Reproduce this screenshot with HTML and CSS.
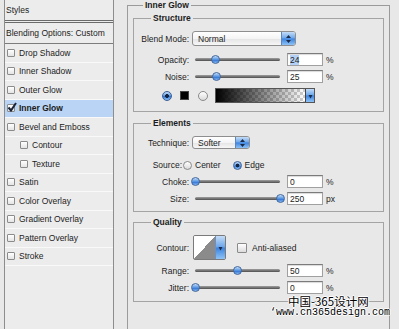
FILE: index.html
```html
<!DOCTYPE html>
<html lang="en">
<head>
    <meta charset="UTF-8">
    <meta name="viewport" content="width=device-width, initial-scale=1.0">
    <title>Layer Style - Inner Glow</title>
    <link rel="stylesheet" href="styles.css">
</head>
<body>

    <div class="window">
        <!-- список стилей слева -->
        <div class="styles-list">
            <div class="styles-head">Styles</div>
            <div class="blend-head">Blending Options: Custom</div>
            <div class="item"><span class="check"></span>Drop Shadow</div>
            <div class="item"><span class="check"></span>Inner Shadow</div>
            <div class="item"><span class="check"></span>Outer Glow</div>
            <div class="item selected">
                <span class="check">
                    <svg class="tick" width="10" height="10" viewBox="0 0 10 10"><path d="M1.5 5.5 L4 8.5 L9 1" fill="none" stroke="#1b2336" stroke-width="2"/></svg>
                </span>Inner Glow
            </div>
            <div class="item"><span class="check"></span>Bevel and Emboss</div>
            <div class="item sub"><span class="check"></span>Contour</div>
            <div class="item sub"><span class="check"></span>Texture</div>
            <div class="item"><span class="check"></span>Satin</div>
            <div class="item"><span class="check"></span>Color Overlay</div>
            <div class="item"><span class="check"></span>Gradient Overlay</div>
            <div class="item"><span class="check"></span>Pattern Overlay</div>
            <div class="item"><span class="check"></span>Stroke</div>
        </div>

        <!-- панель настроек -->
        <fieldset class="panel">
            <legend>Inner Glow</legend>

            <fieldset class="group">
                <legend>Structure</legend>
                <div class="row row-popup">
                    <span class="lbl">Blend Mode:</span>
                    <div class="popup popup-blend">
                        <span class="popup-text">Normal</span>
                        <span class="stepper"><svg width="7" height="10" viewBox="0 0 7 10"><path d="M3.5 1 L6 4 H1 Z M3.5 9 L6 6 H1 Z" fill="#1c2c48"/></svg></span>
                    </div>
                </div>
                <div class="row row-opacity">
                    <span class="lbl">Opacity:</span>
                    <div class="slider"><span class="knob" style="left: calc(24% - 4.5px)"></span></div>
                    <span class="num"><span class="sel">24</span></span>
                    <span class="unit">%</span>
                </div>
                <div class="row">
                    <span class="lbl">Noise:</span>
                    <div class="slider"><span class="knob" style="left: calc(25% - 4.5px)"></span></div>
                    <span class="num">25</span>
                    <span class="unit">%</span>
                </div>
                <div class="row row-color">
                    <span class="radio big on"></span>
                    <span class="swatch"></span>
                    <span class="radio big"></span>
                    <div class="gradient">
                        <span class="gradient-bar"></span>
                        <span class="drop"><svg width="5" height="8" viewBox="0 0 5 8"><path d="M0.5 3 H4.5 L2.5 6.5 Z" fill="#1c2c48"/></svg></span>
                    </div>
                </div>
            </fieldset>

            <fieldset class="group group-elements">
                <legend>Elements</legend>
                <div class="row row-tech">
                    <span class="lbl">Technique:</span>
                    <div class="popup popup-tech">
                        <span class="popup-text">Softer</span>
                        <span class="stepper"><svg width="7" height="10" viewBox="0 0 7 10"><path d="M3.5 1 L6 4 H1 Z M3.5 9 L6 6 H1 Z" fill="#1c2c48"/></svg></span>
                    </div>
                </div>
                <div class="row row-source">
                    <span class="lbl lbl-source">Source:</span>
                    <span class="radio"></span>
                    <span class="opt">Center</span>
                    <span class="radio on"></span>
                    <span class="opt">Edge</span>
                </div>
                <div class="row">
                    <span class="lbl">Choke:</span>
                    <div class="slider"><span class="knob" style="left: calc(0% - 4.5px)"></span></div>
                    <span class="num">0</span>
                    <span class="unit">%</span>
                </div>
                <div class="row">
                    <span class="lbl">Size:</span>
                    <div class="slider"><span class="knob" style="left: calc(100% - 4.5px)"></span></div>
                    <span class="num">250</span>
                    <span class="unit">px</span>
                </div>
            </fieldset>

            <fieldset class="group group-quality">
                <legend>Quality</legend>
                <div class="row row-contour">
                    <span class="lbl">Contour:</span>
                    <div class="contour">
                        <span class="contour-curve"></span>
                        <span class="drop"><svg width="5" height="8" viewBox="0 0 5 8"><path d="M0.5 3 H4.5 L2.5 6.5 Z" fill="#1c2c48"/></svg></span>
                    </div>
                    <span class="box"></span>
                    <span class="opt">Anti-aliased</span>
                </div>
                <div class="row">
                    <span class="lbl">Range:</span>
                    <div class="slider"><span class="knob" style="left: calc(50% - 4.5px)"></span></div>
                    <span class="num">50</span>
                    <span class="unit">%</span>
                </div>
                <div class="row">
                    <span class="lbl">Jitter:</span>
                    <div class="slider"><span class="knob" style="left: calc(0% - 4.5px)"></span></div>
                    <span class="num">0</span>
                    <span class="unit">%</span>
                </div>
            </fieldset>
        </fieldset>
    </div>

    <!-- водяной знак -->
    <div class="watermark">
        <div class="wm-cn">中国-365设计网</div>
        <div class="wm-url">‘www.cn365design.com</div>
    </div>

</body>
</html>
```

FILE: styles.css
```css
body {
    margin: 0;
    width: 399px;
    height: 329px;
    overflow: hidden;
    position: relative;
    background-color: #e8e8e8;
    font-family: "Liberation Sans", Arial, sans-serif;
    font-size: 8.5px;
    color: #1c1c1c;
}
.window {
    display: flex;
    align-items: flex-start;
}

/* список стилей */
.styles-list {
    margin-left: 4px;
    width: 108px;
    height: 340px;
    border-left: 1px solid #8d8d8d;
    border-right: 1px solid #8d8d8d;
    background-color: #ececec;
}
.styles-head {
    height: 20px;
    line-height: 21px;
    padding-left: 1px;
    border-bottom: 3px double #6b6b6b;
}
.blend-head {
    height: 20px;
    line-height: 21px;
    padding-left: 1px;
    border-bottom: 1px solid #7c7c7c;
}
.item {
    height: 17.5px;
    display: flex;
    align-items: center;
    padding-left: 2px;
    border-bottom: 1px solid #f9f9f9;
}
.item.sub {
    padding-left: 15px;
}
.item.selected {
    background-color: #b9d4f4;
    font-weight: bold;
}
.check {
    position: relative;
    flex: none;
    width: 6px;
    height: 6px;
    margin-right: 4px;
    border: 1px solid #8b8b8b;
    border-radius: 1px;
    background: linear-gradient(#ffffff, #e4e4e4);
}
.tick {
    position: absolute;
    left: -1px;
    top: -3px;
}

/* панель */
.panel {
    margin: 0 0 0 13px;
    width: 263px;
    height: 345px;
    box-sizing: border-box;
    min-width: 0;
    padding: 3px 5px 0 5px;
    border: 1px solid #9b9b9b;
}
.panel > legend,
.group > legend {
    padding: 0 2px;
    font-weight: bold;
    line-height: 10px;
}
.panel > legend {
    margin-left: 10px;
}
.group {
    margin: 0;
    min-width: 0;
    padding: 0 6px 8px 0;
    border: 1px solid #a4a4a4;
}
.group > legend {
    margin-left: 17px;
}
.group-elements {
    margin-top: 6px;
    padding-bottom: 6px;
}
.group-quality {
    margin-top: 5px;
    padding-bottom: 7px;
}

.row {
    display: flex;
    align-items: center;
    height: 13px;
    margin-top: 4px;
}
.row-popup {
    height: 15px;
    margin-top: 8px;
}
.row-opacity {
    margin-top: 7px;
}
.row-color {
    height: 15px;
    margin-top: 5px;
    padding-left: 28px;
}
.row-tech {
    margin-top: 8px;
}
.row-source {
    height: 12px;
    margin-top: 10px;
}
.row-contour {
    height: 25px;
    margin-top: 8px;
}
.lbl {
    flex: none;
    width: 55px;
    text-align: right;
}
.lbl-source {
    width: 48px;
}

/* выпадающие списки */
.popup {
    display: flex;
    box-sizing: border-box;
    margin-left: 3px;
    border: 1px solid #8e8e8e;
    border-radius: 3px;
    background: linear-gradient(#ffffff, #f4f4f4 50%, #e4e4e4 52%, #f7f7f7);
    overflow: hidden;
}
.popup-blend {
    width: 104px;
    height: 15px;
}
.popup-tech {
    width: 58px;
    height: 13px;
}
.popup-text {
    flex: 1;
    padding-left: 5px;
    display: flex;
    align-items: center;
}
.stepper {
    width: 13px;
    display: flex;
    align-items: center;
    justify-content: center;
    border-left: 1px solid #5b86c0;
    background: linear-gradient(#c4ddf8, #6aa5ea 48%, #3c82de 52%, #8ec3f6);
}

/* слайдеры */
.slider {
    position: relative;
    flex: none;
    width: 85px;
    height: 3px;
    margin: 0 7px 0 6px;
    border-radius: 2px;
    background: linear-gradient(#a0a0a0, #4e4e4e);
}
.knob {
    position: absolute;
    top: -3px;
    width: 9px;
    height: 9px;
    box-sizing: border-box;
    border: 1px solid #40679f;
    border-radius: 50%;
    background: linear-gradient(#c6ddf8, #5795e2 50%, #2f70d2 56%, #84b8f1);
}
.num {
    flex: none;
    display: flex;
    align-items: center;
    box-sizing: border-box;
    width: 36px;
    height: 13px;
    padding-left: 2px;
    border: 1px solid #a0a0a0;
    border-top-color: #7b7b7b;
    background-color: #fff;
    box-shadow: inset 0 1px 1px rgba(0, 0, 0, 0.15);
}
.sel {
    background-color: #b3d1f6;
}
.unit {
    margin-left: 3px;
}

/* переключатели */
.radio {
    flex: none;
    width: 9px;
    height: 9px;
    box-sizing: border-box;
    border: 1px solid #8a8a8a;
    border-radius: 50%;
    background: linear-gradient(#ffffff, #dadada);
}
.radio.big {
    width: 10px;
    height: 10px;
}
.radio.on {
    border-color: #3a5f97;
    background: radial-gradient(circle, #17243d 0 1.6px, transparent 2.2px),
        linear-gradient(#c2dbf8, #5b98e4 50%, #3477d6 56%, #8dc0f5);
}
.row-source .radio {
    margin-left: 1px;
}
.row-source .opt {
    margin: 0 11px 0 3px;
}
.swatch {
    flex: none;
    width: 9px;
    height: 9px;
    margin: 0 9px 0 8px;
    background-color: #000;
    border: 1px solid #444;
    box-sizing: border-box;
}
.gradient {
    display: flex;
    margin-left: 7px;
    width: 100px;
    height: 15px;
    box-sizing: border-box;
    border: 1px solid #555;
}
.gradient-bar {
    flex: 1;
    background:
        linear-gradient(to right, #000, rgba(0, 0, 0, 0)),
        linear-gradient(45deg, #cfcfcf 25%, transparent 25%, transparent 75%, #cfcfcf 75%),
        linear-gradient(45deg, #cfcfcf 25%, transparent 25%, transparent 75%, #cfcfcf 75%),
        #fff;
    background-size: 100% 100%, 6px 6px, 6px 6px, auto;
    background-position: 0 0, 0 0, 3px 3px, 0 0;
}
.drop {
    width: 8px;
    display: flex;
    align-items: center;
    justify-content: center;
    border-left: 1px solid #444;
    background: linear-gradient(#c4ddf8, #6aa5ea 48%, #3c82de 52%, #8ec3f6);
}

/* контур */
.contour {
    display: flex;
    margin-left: 4px;
    width: 33px;
    height: 25px;
    box-sizing: border-box;
    border: 1px solid #7a7a7a;
    border-radius: 2px;
    overflow: hidden;
}
.contour-curve {
    flex: 1;
    background: linear-gradient(to top left, #8b8b8b 50%, #ffffff 50%);
}
.contour .drop {
    width: 9px;
    border-left: 1px solid #6f8fbf;
}
.box {
    flex: none;
    width: 10px;
    height: 10px;
    box-sizing: border-box;
    margin: 0 5px 0 11px;
    border: 1px solid #8a8a8a;
    border-radius: 1px;
    background: linear-gradient(#ffffff, #dcdcdc);
}

/* водяной знак */
.watermark {
    position: absolute;
    left: 270px;
    top: 295px;
    color: #000;
    text-shadow: 1px 0 #fff, -1px 0 #fff, 0 1px #fff, 0 -1px #fff;
}
.wm-cn {
    height: 12px;
    line-height: 12px;
    padding-left: 18px;
    font-family: "Noto Sans CJK SC", sans-serif;
    font-size: 11.5px;
}
.wm-url {
    height: 12px;
    line-height: 12px;
    font-family: "Liberation Mono", monospace;
    font-size: 10px;
}
```
